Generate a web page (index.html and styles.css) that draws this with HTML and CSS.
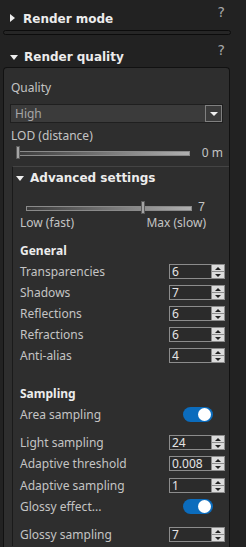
FILE: index.html
```html
<!DOCTYPE html>
<html lang="en">
<head>
  <meta charset="UTF-8">
  <meta name="viewport" content="width=device-width, initial-scale=1.0">
  <title>Render settings</title>
  <link rel="stylesheet" href="styles.css">
</head>
<body>
<div class="head head-first">
  <span class="tri tri-right"></span>
  <span class="head-title">Render mode</span>
  <span class="help">?</span>
</div>
<div class="sep"></div>

<div class="head head-second">
  <span class="tri tri-down"></span>
  <span class="head-title">Render quality</span>
  <span class="help">?</span>
</div>

<div class="panel">
  <div class="label quality-label">Quality</div>
  <div class="select">
    <span class="select-text">High</span>
    <span class="select-btn"><span class="tri-small"></span></span>
  </div>
  <div class="label lod-label">LOD (distance)</div>
  <div class="slider-row lod-row">
    <div class="track lod-track">
      <span class="thumb" style="left: 0%"></span>
    </div>
    <span class="slider-value">0 m</span>
  </div>

  <div class="sub">
    <div class="sub-head">
      <span class="tri tri-down"></span>
      <span class="head-title">Advanced settings</span>
    </div>
    <div class="slider-row adv-row">
      <div class="track adv-track">
        <span class="thumb" style="left: 70%"></span>
      </div>
      <span class="slider-value">7</span>
    </div>
    <div class="slider-labels">
      <span>Low (fast)</span>
      <span>Max (slow)</span>
    </div>

    <div class="group-title general">General</div>
    <div class="row"><span>Transparencies</span><span class="spin"><span class="spin-val">6</span><span class="spin-btns"><i class="up"></i><i class="down"></i></span></span></div>
    <div class="row"><span>Shadows</span><span class="spin"><span class="spin-val">7</span><span class="spin-btns"><i class="up"></i><i class="down"></i></span></span></div>
    <div class="row"><span>Reflections</span><span class="spin"><span class="spin-val">6</span><span class="spin-btns"><i class="up"></i><i class="down"></i></span></span></div>
    <div class="row"><span>Refractions</span><span class="spin"><span class="spin-val">6</span><span class="spin-btns"><i class="up"></i><i class="down"></i></span></span></div>
    <div class="row"><span>Anti-alias</span><span class="spin"><span class="spin-val">4</span><span class="spin-btns"><i class="up"></i><i class="down"></i></span></span></div>

    <div class="group-title sampling">Sampling</div>
    <div class="row row-toggle"><span>Area sampling</span><span class="toggle"><span class="knob"></span></span></div>
    <div class="row"><span>Light sampling</span><span class="spin"><span class="spin-val">24</span><span class="spin-btns"><i class="up"></i><i class="down"></i></span></span></div>
    <div class="row"><span>Adaptive threshold</span><span class="spin"><span class="spin-val">0.008</span><span class="spin-btns"><i class="up"></i><i class="down"></i></span></span></div>
    <div class="row"><span>Adaptive sampling</span><span class="spin"><span class="spin-val">1</span><span class="spin-btns"><i class="up"></i><i class="down"></i></span></span></div>
    <div class="row row-toggle"><span>Glossy effect...</span><span class="toggle"><span class="knob"></span></span></div>
    <div class="row"><span>Glossy sampling</span><span class="spin"><span class="spin-val">7</span><span class="spin-btns"><i class="up"></i><i class="down"></i></span></span></div>
  </div>
</div>
</body>
</html>
```

FILE: styles.css
```css
html, body {
  height: 100%;
}
body {
  margin: 0;
  background-color: #222;
  font-family: "Noto Sans", "Open Sans", sans-serif;
  font-size: 12px;
  color: #c4c4c4;
  overflow: hidden;
}
.head {
  display: flex;
  align-items: flex-start;
  padding-left: 10px;
  width: 216px;
}
.head-first {
  height: 30px;
}
.head-second {
  height: 32px;
}
.head-title {
  font-family: "DejaVu Sans", sans-serif;
  font-weight: bold;
  font-size: 12px;
  color: #ececec;
  line-height: 14px;
  margin-top: 12px;
}
.head-second .head-title {
  margin-top: 15px;
}
.help {
  margin-left: auto;
  font-family: "DejaVu Sans", sans-serif;
  font-size: 14px;
  color: #a8a8a8;
  margin-top: 4px;
  margin-right: 1px;
}
.head-second .help {
  margin-top: 7px;
}
.tri {
  width: 0;
  height: 0;
}
.tri-right {
  border-top: 4px solid transparent;
  border-bottom: 4px solid transparent;
  border-left: 5px solid #eee;
  margin-top: 14px;
  margin-right: 8px;
}
.tri-down {
  border-left: 4px solid transparent;
  border-right: 4px solid transparent;
  border-top: 5px solid #eee;
  margin-top: 20px;
  margin-right: 6px;
}
.sep {
  margin-left: 3px;
  width: 226px;
  height: 3px;
  border: 1px solid #0c0c0c;
  border-radius: 3px;
  background-color: #262626;
}
.panel {
  margin-left: 3px;
  width: 225px;
  height: 468px;
  border: 1px solid #111;
  border-bottom: none;
  border-radius: 4px 4px 0 0;
  background-color: #2e2e2e;
  padding-top: 12px;
}
.label {
  padding-left: 7px;
  line-height: 16px;
}
.quality-label {
  height: 24px;
}
.select {
  margin-left: 6px;
  width: 211px;
  height: 17px;
  border: 1px solid #1f1f1f;
  background-color: #3b3b3b;
  display: flex;
  align-items: center;
}
.select-text {
  padding-left: 4px;
  color: #a6a6a6;
}
.select-btn {
  margin-left: auto;
  width: 15px;
  height: 15px;
  border: 1px solid #808080;
  display: flex;
  align-items: center;
  justify-content: center;
}
.tri-small {
  width: 0;
  height: 0;
  border-left: 4px solid transparent;
  border-right: 4px solid transparent;
  border-top: 4px solid #f0f0f0;
}
.lod-label {
  margin-top: 5px;
  height: 16px;
}
.slider-row {
  display: flex;
  align-items: center;
  height: 14px;
}
.lod-row {
  margin-top: 2px;
  padding-left: 12px;
}
.track {
  position: relative;
  height: 3px;
  border: 1px solid #8a8a8a;
  background: linear-gradient(to right, #3a3a3a, #b0b0b0);
}
.lod-track {
  width: 172px;
}
.adv-track {
  width: 164px;
}
.thumb {
  position: absolute;
  top: -6px;
  width: 2px;
  height: 11px;
  margin-left: -1px;
  background-color: #a4a4a4;
  border: 1px solid #5a5a5a;
}
.slider-value {
  margin-left: auto;
  padding-right: 6px;
  line-height: 14px;
}
.sub {
  margin-top: 6px;
  margin-left: 8px;
  height: 379px;
  border-top: 1px solid #444;
  border-left: 1px solid #1a1a1a;
  padding-left: 7px;
  padding-right: 4px;
}
.sub-head {
  display: flex;
  align-items: flex-start;
  height: 28px;
  margin-left: -4px;
}
.sub-head .head-title {
  margin-top: 4px;
}
.sub-head .tri-down {
  margin-top: 9px;
}
.adv-row {
  margin-top: 6px;
  padding-left: 6px;
}
.adv-row .slider-value {
  align-self: flex-start;
  font-family: "Liberation Sans", sans-serif;
  font-size: 12.5px;
  line-height: 12px;
  padding-right: 20px;
}
.slider-labels {
  display: flex;
  justify-content: space-between;
  width: 186px;
  line-height: 16px;
  margin-top: 0;
}
.group-title {
  font-weight: bold;
  color: #ececec;
  line-height: 21px;
  height: 21px;
}
.general {
  margin-top: 9px;
}
.sampling {
  margin-top: 17px;
}
.row {
  display: flex;
  align-items: center;
  justify-content: space-between;
  height: 21px;
}
.row-toggle {
  margin-bottom: 7px;
}
.row-toggle + .row + .row + .row {
  margin-top: 1px;
}
.spin {
  display: flex;
  width: 54px;
  height: 13px;
  border: 1px solid #8c8c8c;
  background-color: #2b2b2b;
}
.spin-val {
  flex: 1;
  padding-left: 2px;
  line-height: 13px;
  color: #e4e4e4;
}
.spin-btns {
  display: flex;
  flex-direction: column;
  width: 12px;
  border-left: 1px solid #8c8c8c;
}
.spin-btns i {
  flex: 1;
  background-color: #dcdcdc;
  display: flex;
  align-items: center;
  justify-content: center;
}
.spin-btns i.up {
  border-bottom: 1px solid #8c8c8c;
}
.spin-btns i.up::after {
  content: "";
  border-left: 3px solid transparent;
  border-right: 3px solid transparent;
  border-bottom: 3px solid #222;
}
.spin-btns i.down::after {
  content: "";
  border-left: 3px solid transparent;
  border-right: 3px solid transparent;
  border-top: 3px solid #222;
}
.toggle {
  position: relative;
  width: 30px;
  height: 15px;
  border-radius: 8px;
  background-color: #0b6cbd;
  margin-right: 12px;
}
.knob {
  position: absolute;
  right: 2px;
  top: 1px;
  width: 13px;
  height: 13px;
  border-radius: 50%;
  background-color: #fff;
}
```
